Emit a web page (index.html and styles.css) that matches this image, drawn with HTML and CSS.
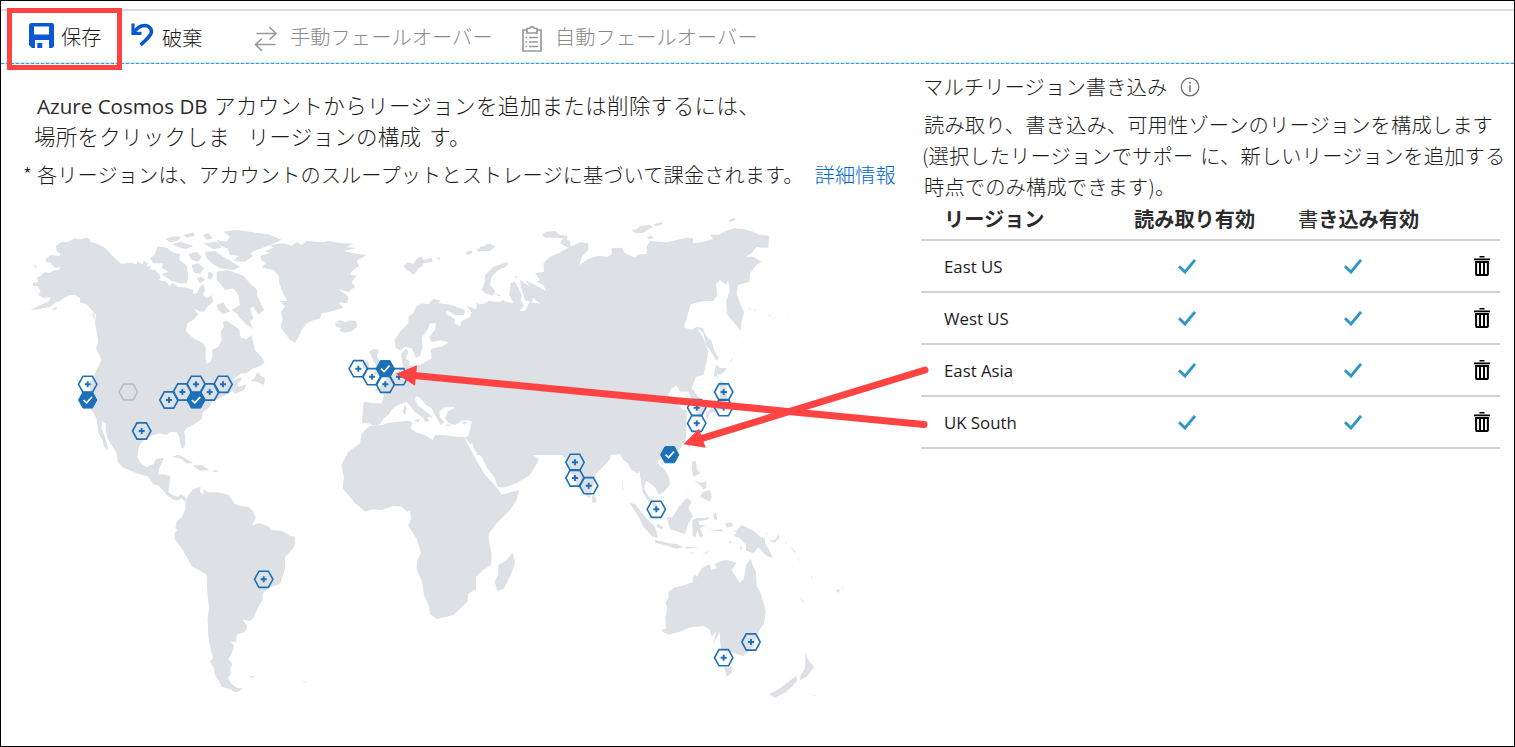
FILE: index.html
```html
<!DOCTYPE html>
<html lang="ja">
<head>
<meta charset="utf-8">
<title>Azure Cosmos DB</title>
<link rel="stylesheet" href="styles.css">
</head>
<body>
<svg class="defs" width="0" height="0" aria-hidden="true">
  <symbol id="check" viewBox="0 0 20 16"><path d="M2 8.2 8 14 18 1.8" fill="none" stroke="#2f96c8" stroke-width="2.9"/></symbol>
  <symbol id="trash" viewBox="0 0 16 20"><path d="M5.5 .7h5M0 3.4h16" fill="none" stroke="#000" stroke-width="1.6"/><path d="M2.1 6h11.8v12.3q0 .7-.7.7H2.8q-.7 0-.7-.7ZM6 6v13M10 6v13" fill="none" stroke="#000" stroke-width="2"/></symbol>
  <symbol id="hex" viewBox="-11 -11 22 22" overflow="visible"><path d="M-9.2 0-4.7-8.1H4.7L9.2 0 4.7 8.1H-4.7Z" fill="none" stroke="#1b70b8" stroke-width="1.6"/><path d="M-3 0H3M0-3V3" stroke="#1b70b8" stroke-width="1.9"/></symbol>
  <symbol id="hexon" viewBox="-11 -11 22 22" overflow="visible"><path d="M-9.2 0-4.7-8.1H4.7L9.2 0 4.7 8.1H-4.7Z" fill="#1b70b8" stroke="#1b70b8" stroke-width="1"/><path d="M-4.2 0-1.2 2.8 4.3-3" fill="none" stroke="#fff" stroke-width="1.7"/></symbol>
</svg>
<div class="page">
  <header class="toolbar">
    <div class="tool save">
      <svg width="25" height="25" viewBox="0 0 25 25"><path fill="#0b58d6" fill-rule="evenodd" d="M2.500 0h20A2.300 2.300 0 0 1 25 2.300V22.700Q25 25 22.500 25H20V17H6V25H3L0 22V2.300Q0 0 2.500 0ZM5 3.500V11.500H20V3.500Z"/><path fill="#0b58d6" d="M8.300 20h5v5H8.300z"/></svg>
      <span>保存</span>
    </div>
    <div class="tool undo">
      <svg width="23" height="24" viewBox="0 0 23 24" fill="none" stroke="#0b58d6"><path d="M2 .5V10.300H10.500" stroke-width="3.200"/><path d="M2.500 10C6 4.500 9.500 2.500 13.500 2.500 19 2.500 22 7.500 19.500 11.500 17.500 14.800 14 18 9.500 22" stroke-width="3.600"/></svg>
      <span>破棄</span>
    </div>
    <div class="tool manual off">
      <svg width="24" height="26" viewBox="0 0 24 26" fill="none" stroke="#999" stroke-width="1.600"><path d="M2.500 7.500H22M15.500 1 22 7.500 15.500 13.500M21.500 18.500H1.500M8 12.500 1.500 18.500 8 25"/></svg>
      <span>手動フェールオーバー</span>
    </div>
    <div class="tool auto off">
      <svg width="20" height="26" viewBox="0 0 20 26" fill="none" stroke="#999" stroke-width="1.700"><path d="M5 4H1V25H19V4H15M5 2.500V7H15V2.500H12.500Q12 .8 10 .8T7.500 2.500Z"/><path d="M3.500 11.500h1.500M7 11.500h9M3.500 16h1.500M7 16h9M3.500 20.500h1.500M7 20.500h9" stroke-width="1.400"/></svg>
      <span>自動フェールオーバー</span>
    </div>
  </header>

  <main class="content">
    <section class="left">
      <p class="lead first">Azure Cosmos DB <span class="jp">アカウントからリージョンを追加または削除するには、</span></p>
      <p class="lead second"><span>場所をクリックしま</span><span>リージョンの構成</span><span>す。</span></p>
      <p class="note"><span>*</span><span>各リージョンは、アカウントのスループットとストレージに基づいて課金されます。</span><a>詳細情報</a></p>
      <svg class="map" width="840" height="500" viewBox="20 210 840 500">
        <g class="land">
          <!-- North America -->
          <g transform="translate(20 215) scale(.33333)">
            <path d="M30 285 60 270 75 265 88 258 92 247 70 248 55 240 62 228 52 214 38 212 40 204 55 200 50 190 65 180 75 172 90 174 102 166 118 164 122 155 104 158 90 142 77 140 78 130 95 120 118 124 122 118 110 108 108 92 125 82 145 80 165 70 180 73 200 68 212 74 210 80 235 88 255 98 270 115 290 135 305 147 330 143 350 148 352 140 368 148 372 138 384 145 378 155 392 152 388 162 405 165 420 180 422 190 415 195 440 200 448 212 458 203 475 215 500 218 520 225 520 238 530 235 540 215 550 208 556 225 548 238 560 250 575 240 580 262 562 275 552 290 540 290 520 280 535 298 520 315 502 325 498 348 515 365 530 375 550 385 558 400 556 430 560 446 572 440 578 420 576 405 595 395 605 375 602 350 612 335 608 320 620 318 640 330 658 345 662 368 680 372 695 360 700 385 705 405 728 430 734 445 715 455 695 462 680 475 662 475 645 490 635 500 660 487 665 495 652 505 655 515 680 508 672 525 645 537 638 528 600 550 575 560 570 575 548 592 545 612 520 630 500 640 492 650 497 670 495 690 488 703 480 685 478 665 470 652 450 650 440 660 420 655 400 660 380 670 362 685 355 700 352 725 362 745 380 755 400 748 408 732 432 728 425 745 418 760 415 778 430 778 452 784 448 810 445 832 460 842 475 845 482 837 498 847 496 860 485 850 472 857 458 853 440 840 430 827 415 812 400 808 385 785 350 775 330 766 310 758 293 740 290 715 275 690 262 670 256 640 258 628 246 618 244 640 255 665 262 690 265 705 252 695 246 672 236 655 229 610 215 585 205 560 210 500 225 475 235 455 245 435 228 400 235 380 230 350 225 325 228 300 215 285 200 268 180 262 180 250 165 240 150 240 130 250 120 258 108 262 90 275 60 282Z"/>
            <path d="M390 130 405 118 412 94 440 98 458 112 480 118 478 135 488 142 500 152 505 190 500 205 480 205 455 198 425 178 445 170 425 158 430 145 400 145ZM436 72 460 64 485 66 470 78 450 82ZM455 88 480 80 505 88 520 92 500 102 480 98ZM490 60 520 52 525 62 500 68ZM505 118 530 110 545 125 535 140 515 135ZM515 150 535 145 552 160 540 178 520 172ZM548 60 565 55 578 70 560 75ZM550 85 590 80 605 98 580 102ZM555 110 585 108 610 125 660 155 640 165 600 160 575 145 560 130ZM530 190 545 185 555 195 540 205ZM565 170 580 175 575 195 562 190ZM610 50 650 45 700 52 745 58 785 74 745 92 710 105 690 115 700 122 675 140 640 138 655 122 630 120 622 100 600 92 590 75 620 80 630 65ZM590 170 620 165 650 175 670 182 690 205 712 225 710 240 732 285 715 300 700 275 690 280 700 310 690 320 700 342 680 330 660 310 650 295 635 285 660 270 655 240 640 220 615 225 600 205 590 195ZM590 270 610 262 620 280 632 288 610 298 595 285ZM720 130 755 120 780 125 780 165 750 158 725 155 740 145ZM38 148 50 152 50 162ZM95 282 112 275 108 285ZM216 290 224 300 222 315ZM236 400 252 412 250 435 240 420ZM455 725 475 720 495 730 520 745 500 745 480 730ZM518 752 545 750 568 765 540 767ZM578 766 594 766 590 771 578 770ZM692 498 705 488 712 470 720 480 735 490 732 510 715 502Z"/>
          </g>
          <!-- South America -->
          <g transform="translate(160 460) scale(.33333)">
            <path d="M76 125 85 105 100 88 122 80 120 95 130 105 130 88 145 97 165 97 190 100 205 105 215 118 222 130 240 138 265 140 280 155 287 175 276 195 300 190 325 199 332 210 365 212 390 227 405 230 404 255 398 268 375 292 375 325 368 350 360 372 340 378 322 386 308 400 308 420 295 440 280 475 270 483 247 478 262 498 255 515 230 524 228 545 212 545 222 558 215 580 205 598 218 612 210 625 213 640 204 655 215 672 232 684 250 685 235 695 225 697 210 688 185 680 175 660 165 645 160 620 150 605 160 595 152 570 145 530 143 480 147 440 142 400 140 345 125 335 95 318 80 290 62 260 45 238 43 220 52 210 46 205 50 185 65 172 76 150ZM265 648 283 648 275 654ZM425 662 440 666 436 668Z"/>
          </g>
          <!-- Greenland, Iceland and Europe -->
          <g transform="translate(240 215) scale(.33333)">
            <path d="M60 122 90 115 75 108 100 98 92 90 130 85 155 92 170 82 185 90 200 78 250 82 265 78 300 84 340 86 320 95 350 100 310 108 340 115 380 120 350 137 357 152 340 165 330 178 350 182 335 200 345 215 325 230 295 222 325 245 322 265 295 262 310 278 270 290 245 295 240 310 215 318 200 325 185 345 175 367 165 384 150 375 135 355 122 335 128 310 122 290 135 275 120 258 142 258 130 238 118 205 115 180 100 165 65 158 90 148 66 138ZM285 322 300 328 290 318 302 316 315 322 330 316 348 318 352 335 335 348 315 353 298 348 305 340 288 335ZM490 152 505 142 520 148 530 132 545 124 550 135 575 130 578 140 550 145 545 155 535 160 522 180 510 170 500 165ZM590 130 602 126 597 134ZM675 115 690 105 700 112 685 120ZM710 102 735 95 740 85 750 95 765 92 750 104 730 105 715 112ZM388 410 400 402 418 405 410 420 418 440 432 470 422 480 400 478 408 450 396 430ZM366 445 385 438 388 460 370 462Z"/>
            <path d="M370 565 375 560 400 565 425 565 432 540 420 528 402 525 425 512 440 490 470 472 490 455 485 430 484 415 500 400 505 412 497 430 510 440 505 450 525 455 550 445 575 430 572 405 580 400 608 394 625 382 600 376 575 382 568 365 585 345 588 325 570 325 562 345 545 368 548 395 540 422 528 430 515 400 495 395 480 406 468 400 463 375 480 350 505 325 505 305 520 295 528 275 545 265 565 268 580 252 600 256 598 265 635 270 675 285 672 300 645 300 620 285 618 296 645 312 642 325 660 334 665 318 690 305 695 292 680 272 705 282 715 280 712 270 735 265 745 258 770 260 785 262 800 260 800 680 700 690 690 664 700 612 665 618 645 630 625 625 615 610 625 588 645 578 640 576 610 578 598 590 600 605 612 622 602 630 585 600 575 580 555 568 540 548 528 542 525 555 535 572 560 592 580 608 562 605 568 618 555 620 550 610 525 592 512 575 500 560 490 565 478 568 465 575 455 585 445 600 432 610 420 628 400 632 385 625 366 625Z"/>
            <path d="M494 568 500 580 495 600 488 590ZM520 615 540 612 535 622ZM612 630 632 628 630 633ZM665 622 682 620 675 630Z"/>
          </g>
          <!-- Africa and Arabia -->
          <g transform="translate(330 390) scale(.33333)">
            <path d="M120 108 155 105 180 98 235 92 248 98 242 115 260 128 285 135 308 150 315 135 345 136 380 140 404 140 408 152 425 185 440 212 465 255 490 280 505 300 515 314 567 300 560 330 540 360 500 400 476 432 478 460 485 490 483 525 460 540 438 560 438 598 415 610 412 635 370 675 320 687 300 672 298 650 282 615 275 570 260 540 262 510 273 490 262 450 235 408 243 385 240 362 230 365 215 350 190 348 155 360 130 358 107 365 75 340 55 315 38 295 42 260 34 225 55 185 90 160 95 130ZM548 488 556 518 540 560 520 598 502 602 494 575 505 555 505 525 530 510Z"/>
            <path d="M400 80 425 95 415 138 404 142 412 152 424 165 426 155 432 178 455 200 472 235 495 265 503 290 520 293 560 280 600 255 615 230 627 208 605 192 597 170 585 190 562 192 552 178 538 160 530 145 540 140 552 158 580 175 600 165 605 178 640 178 665 175 690 190 705 205 820 220 820 0 520 0Z"/>
          </g>
          <!-- Northern and eastern Asia -->
          <g transform="translate(480 215) scale(.33333)">
            <path d="M-10 262 0 270 20 282 30 268 60 265 65 255 85 262 100 264 88 240 92 205 105 200 125 240 122 255 132 272 120 288 135 288 148 262 180 266 160 248 155 262 135 255 122 215 120 195 150 215 135 195 165 210 198 228 190 210 170 200 180 195 165 175 192 170 190 145 210 125 235 115 265 98 240 85 250 70 270 78 272 95 300 82 325 85 325 105 305 125 298 150 325 132 355 122 380 125 395 120 395 100 425 98 435 115 465 128 475 118 500 118 500 95 510 78 535 80 560 82 590 75 620 68 638 70 640 85 670 80 700 72 690 60 720 58 735 48 765 40 790 42 820 50 840 60 867 62 865 98 845 98 830 95 815 115 795 125 820 125 845 140 830 150 810 175 808 200 775 210 770 235 780 265 792 290 785 320 782 348 760 320 742 300 738 260 750 225 743 190 750 175 740 210 720 195 708 208 712 240 700 258 670 258 632 268 620 310 612 337 635 345 650 335 670 370 685 410 680 440 670 480 648 485 635 520 660 552 675 575 670 605 655 605 650 575 638 560 625 530 600 530 590 512 575 520 563 540 590 560 605 580 622 600 610 620 620 640 612 680 590 700 300 720 -10 720Z"/>
            <path d="M83 140 82 152 55 165 35 185 30 210 45 225 40 242 15 235 5 225 15 200 15 180 40 155ZM40 235 62 240 60 245ZM105 183 115 187 108 190ZM0 95 18 92 30 85 45 95 30 108 0 108ZM185 58 200 50 225 48 240 60 262 62 262 72 230 68 195 68ZM455 45 470 43 480 33 510 30 520 36 505 42 490 53 465 55ZM520 28 545 21 548 27 528 34ZM500 65 515 62 522 70 505 72ZM745 18 760 8 768 14 750 22ZM650 335 668 340 680 365 695 378 702 405 718 432 708 435 690 405 678 390 670 355ZM708 448 720 458 742 460 725 478 710 478 715 490 702 482ZM718 495 738 505 742 550 735 580 700 590 675 600 700 572 720 560ZM678 590 688 600 680 618ZM865 298 873 302 868 305ZM822 282 828 286 822 287ZM808 278 814 284 806 283ZM877 308 882 311 877 312ZM921 310 926 312 921 313ZM770 372 773 360 775 361ZM762 412 766 415 762 416ZM745 445 752 435 758 428 755 437Z"/>
          </g>
          <!-- South-east Asia and Oceania -->
          <g transform="translate(540 430) scale(.33333)">
            <path d="M-10 58 40 55 65 75 80 80 80 105 95 130 110 165 130 190 148 205 155 180 165 155 165 135 185 115 210 88 212 75 240 72 250 90 262 98 275 120 292 130 298 122 303 155 308 185 322 210 335 220 352 245 358 242 345 215 330 205 320 190 312 175 318 152 330 160 345 172 357 195 375 182 389 165 388 145 375 120 358 105 352 92 372 85 400 68 420 58 438 25 440-60-10-60Z"/>
            <path d="M440 38 450 42 450 60ZM360 98 372 96 368 106ZM156 198 162 196 171 210 165 220 156 216ZM268 218 285 222 315 260 345 290 355 325 335 318 310 290 295 258ZM345 330 365 334 385 340 410 342 430 352 410 356 375 346 345 338ZM435 350 480 352 440 356ZM450 366 465 370 455 372ZM485 375 512 358 500 370ZM380 262 398 262 415 232 440 203 455 215 445 235 460 258 445 280 435 312 405 302 390 298ZM457 270 470 264 500 264 505 258 505 268 475 274 478 285 498 285 480 295 490 318 480 322 472 302 466 322 458 318ZM457 95 468 93 470 115 480 130 460 140 455 115ZM462 150 480 158 500 155 498 175 490 178 480 165ZM455 172 440 195 442 190ZM480 200 490 185 510 180 516 200 508 215 495 208ZM520 252 528 248 532 270 522 268ZM555 280 575 277 580 288 560 292ZM505 300 545 298 550 305 530 303ZM578 300 590 302 605 285 640 302 662 322 675 325 675 340 685 355 698 383 680 378 655 352 640 370 618 362 618 345 600 325 580 318 590 308ZM600 348 608 352 602 360ZM568 332 576 334 570 344ZM685 332 705 330 715 315 712 308 720 322 705 338ZM675 308 685 312 680 314ZM732 330 742 342 736 340ZM748 345 770 370 762 366ZM772 382 782 395 776 390ZM778 498 798 522 788 514ZM888 482 895 477 900 482 895 489ZM905 470 912 470 908 474ZM814 436 817 445 813 444ZM248 150 250 180 247 178ZM350 280 370 292 365 298 350 290Z"/>
            <path d="M385 485 405 472 435 465 458 457 462 432 472 440 478 425 490 412 508 403 515 420 530 415 525 402 545 392 562 390 590 398 575 420 590 445 600 458 612 445 618 405 632 386 640 410 648 425 650 468 662 490 670 515 677 545 672 580 655 605 640 650 610 678 590 672 570 665 545 660 540 635 540 605 520 640 528 605 515 620 508 598 490 588 450 592 420 605 385 614 363 602 378 595 376 560 382 535 376 518 385 505ZM552 712 578 712 575 730 560 740ZM797 668 805 690 823 712 800 740 780 752 782 735 795 715ZM768 738 772 752 740 785 705 804 688 793 720 775ZM820 795 826 796 823 800Z"/>
          </g>
        </g>
        <g>
          <use href="#hex" x="76.700" y="373.300" width="22" height="22"/>
          <use href="#hexon" x="76.700" y="389" width="22" height="22"/>
          <path d="M119.100 392 123.600 383.900H133L137.500 392 133 400.100H123.600Z" fill="none" stroke="#b8babd" stroke-width="1.500"/>
          <use href="#hex" x="158" y="389" width="22" height="22"/>
          <use href="#hex" x="171.400" y="381" width="22" height="22"/>
          <use href="#hex" x="185" y="373.300" width="22" height="22"/>
          <use href="#hex" x="198.700" y="381" width="22" height="22"/>
          <use href="#hexon" x="185" y="389" width="22" height="22"/>
          <use href="#hex" x="212" y="373.300" width="22" height="22"/>
          <use href="#hex" x="130.700" y="420" width="22" height="22"/>
          <use href="#hex" x="252.700" y="568.300" width="22" height="22"/>
          <use href="#hex" x="347.300" y="357.700" width="22" height="22"/>
          <use href="#hex" x="361" y="365.700" width="22" height="22"/>
          <use href="#hexon" x="374.300" y="357.700" width="22" height="22"/>
          <use href="#hex" x="374.300" y="373.300" width="22" height="22"/>
          <use href="#hex" x="388" y="365.700" width="22" height="22"/>
          <use href="#hex" x="712.700" y="381" width="22" height="22"/>
          <use href="#hex" x="712.700" y="396.700" width="22" height="22"/>
          <use href="#hex" x="685.700" y="396.700" width="22" height="22"/>
          <use href="#hex" x="685.700" y="412.300" width="22" height="22"/>
          <use href="#hexon" x="658.700" y="443.700" width="22" height="22"/>
          <use href="#hex" x="564" y="451.300" width="22" height="22"/>
          <use href="#hex" x="564" y="467" width="22" height="22"/>
          <use href="#hex" x="577.700" y="474.700" width="22" height="22"/>
          <use href="#hex" x="645.300" y="498.300" width="22" height="22"/>
          <use href="#hex" x="740" y="631" width="22" height="22"/>
          <use href="#hex" x="712.700" y="646.700" width="22" height="22"/>
        </g>
      </svg>
    </section>

    <section class="right">
      <h2 class="title"><span>マルチリージョン書き込み</span>
        <svg width="20" height="20" viewBox="0 0 20 20" fill="none" stroke="#6a6a6a"><circle cx="10" cy="10" r="8.800" stroke-width="1.200"/><path d="M10 8.200V15M10 5V6.700" stroke-width="1.400"/></svg>
      </h2>
      <p class="body">読み取り、書き込み、可用性ゾーンのリージョンを構成します</p>
      <p class="body split"><span>(選択したリージョンでサポー</span><span>に、新しいリージョンを追加する</span></p>
      <p class="body">時点でのみ構成できます)。</p>
      <div class="table">
        <div class="row head"><span>リージョン</span><span>読み取り有効</span><span class="write"><i>書</i>き込み有効</span><span></span></div>
        <div class="row"><span>East US</span><svg class="ck"><use href="#check"/></svg><svg class="ck"><use href="#check"/></svg><svg class="bin"><use href="#trash"/></svg></div>
        <div class="row"><span>West US</span><svg class="ck"><use href="#check"/></svg><svg class="ck"><use href="#check"/></svg><svg class="bin"><use href="#trash"/></svg></div>
        <div class="row"><span>East Asia</span><svg class="ck"><use href="#check"/></svg><svg class="ck"><use href="#check"/></svg><svg class="bin"><use href="#trash"/></svg></div>
        <div class="row"><span>UK South</span><svg class="ck"><use href="#check"/></svg><svg class="ck"><use href="#check"/></svg><svg class="bin"><use href="#trash"/></svg></div>
      </div>
    </section>
  </main>

  <svg class="arrows" width="1515" height="747" viewBox="0 0 1515 747">
    <g stroke="#ff4343" stroke-width="7" stroke-linecap="round"><path d="M924 424.500 414 375.500M925 370 702 438.300"/></g>
    <path fill="#ff4343" d="M396 373.800 417 365.300 415 385.700ZM683.300 444.300 699 428.700 705.700 447.700Z"/>
  </svg>
  <div class="highlight"></div>
</div>
</body>
</html>
```
FILE: styles.css
```css
* { box-sizing: border-box; }
body {
  margin: 0;
  background: #fff;
  color: #1c1c1c;
  font-family: "Noto Sans CJK JP", sans-serif;
  font-weight: 300;
}
p, h2 { margin: 0; font-weight: 300; white-space: nowrap; }
.defs { position: absolute; }
.page {
  position: relative;
  width: 1515px;
  height: 747px;
  padding-top: 8px;
  border: 1px solid #000;
  overflow: hidden;
}
.toolbar {
  display: flex;
  height: 55px;
  padding-left: 28px;
  border-top: 2px solid #dcdcdc;
  border-bottom: 1px dashed #12aee6;
  box-shadow: inset 0 -1px #dfe6e9;
  background: linear-gradient(#c3dbe4, #c3dbe4) 0 100% / 100% 1px no-repeat border-box;
  font-size: 20.2px;
  line-height: 51px;
  white-space: nowrap;
}
.tool { display: flex; letter-spacing: .1px; }
.tool svg { flex: none; }
.save { width: 102px; }
.save svg { margin: 12px 7px 0 0; }
.undo { width: 123px; }
.undo svg { margin: 12px 8px 0 0; }
.undo span { padding-top: 1px; }
.manual { width: 268px; }
.manual svg { margin: 15px 12px 0 0; }
.auto svg { margin: 15px 13px 0 0; }
.off { color: #8a8a8a; }

.content { display: grid; grid-template-columns: 920px 579px; }
.lead { height: 31px; font-size: 21.5px; line-height: 31px; letter-spacing: .25px; }
.first { padding-left: 36px; font-family: "Open Sans", "Noto Sans CJK JP", sans-serif; font-size: 20.6px; font-weight: 400; letter-spacing: 0; color: #2b2b2b; }
.first .jp { margin-left: 1px; color: #1c1c1c; font-family: "Noto Sans CJK JP", sans-serif; font-size: 21.5px; font-weight: 300; letter-spacing: .36px; }
.left { padding-top: 25px; }
.second { display: flex; padding-left: 33px; }
.second span:nth-child(2) { margin: 0 8px 0 18px; }
.note { display: flex; margin-top: 8px; padding-left: 22px; font-size: 20.2px; line-height: 31px; letter-spacing: .11px; }
.note span:first-child { width: 14px; }
.note a { margin-left: 11px; color: #0067cc; }
.map { display: block; margin: 20px 0 0 19px; }
.land { fill: #dde0e5; }

.right { padding-top: 6px; font-size: 20.3px; letter-spacing: .12px; }
.title { display: flex; height: 32px; padding-left: 2px; font-size: 20.3px; line-height: 32px; }
.title svg { margin: 7px 0 0 13px; }
.body { height: 31px; padding-left: 3px; line-height: 31px; }
.title + .body { margin-top: 7px; }
.split { display: flex; padding-left: 1px; }
.split span + span { margin-left: 7px; }
.table { font-family: "Open Sans", "Noto Sans CJK JP", sans-serif; letter-spacing: 0; }
.row {
  display: grid;
  grid-template-columns: 190px 166px 164px 58px;
  align-items: center;
  height: 52px;
  padding-left: 23px;
  border-bottom: 2px solid #d2d2d2;
  font-size: 16.8px;
  font-weight: 400;
}
.row > span { padding-top: 1px; }
.head { height: 39px; padding-bottom: 4px; font-size: 20.2px; font-weight: 600; font-family: "Noto Sans CJK JP", sans-serif; white-space: nowrap; line-height: 30px; color: #2b2b2b; }
.head > span { padding-top: 0; }
.head .write { margin-left: -2px; }
.head i { font-style: normal; font-weight: 400; }
.ck { width: 20px; height: 16px; margin: 0 0 0 43px; }
.bin { width: 16px; height: 20px; margin-left: 10px; }
.arrows { position: absolute; left: -1px; top: -1px; }
.highlight { position: absolute; left: 6px; top: 7px; width: 115px; height: 62px; border: 5px solid #ff4343; }
```
